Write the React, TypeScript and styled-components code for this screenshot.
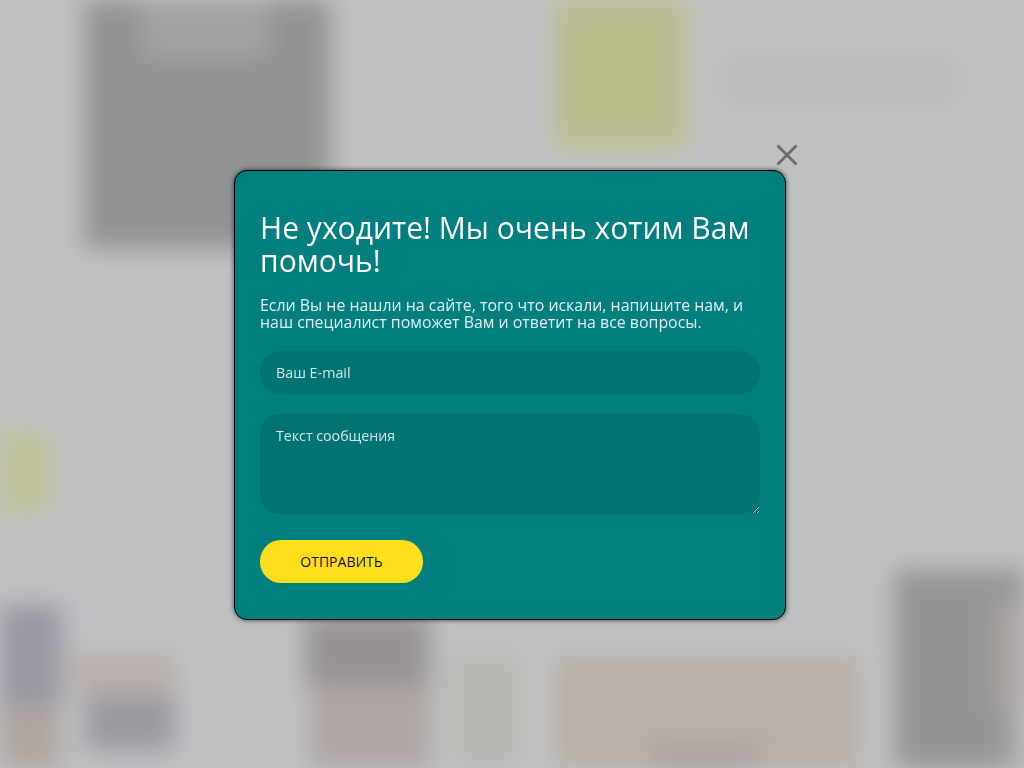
import React from 'react';
import styled, { createGlobalStyle } from 'styled-components';

const GlobalStyle = createGlobalStyle`
  html, body {
    margin: 0;
    padding: 0;
    height: 100%;
    overflow: hidden;
    background: #bfc0c2;
    font-family: 'Open Sans', sans-serif;
  }
`;

const block = (color: string, x: number, y: number, w: number, h: number) =>
  `linear-gradient(${color}, ${color}) ${x + 40}px ${y + 40}px / ${w}px ${h}px no-repeat`;

// the page behind the popup, only colour patches are left of it after the blur
const patches = [
  block('#adb3aa', 1010, 700, 14, 68),
  block('#aca3a0', 995, 600, 29, 110),
  block('#959597', 895, 570, 129, 198),
  block('#a8a09c', 650, 745, 110, 23),
  block('#b8b0a8', 555, 655, 305, 113),
  block('#b6bab2', 450, 650, 70, 118),
  block('#989493', 305, 615, 125, 70),
  block('#aea6a3', 310, 685, 120, 83),
  block('#9c99a0', 85, 695, 90, 55),
  block('#b9b0ac', 70, 650, 105, 45),
  block('#aea6a0', 0, 705, 60, 63),
  block('#9a98a2', 0, 605, 62, 100),
  block('#bdc096', 0, 432, 52, 80),
  block('#bcbd8e', 555, 0, 132, 148),
  block('#a1a2a3', 140, 0, 130, 60),
  block('#929295', 85, 0, 245, 248),
  block('#b9babc', 720, 50, 240, 60),
].join(', ');

const Backdrop = styled.div`
  position: fixed;
  inset: -40px;
  background: ${patches}, #bfc0c2;
  filter: blur(12px);
`;

const Overlay = styled.div`
  position: fixed;
  inset: 0;
  padding: 170px 0 0 234px;
`;

const Modal = styled.div`
  position: relative;
  box-sizing: border-box;
  width: 552px;
  height: 450px;
  padding: 40px 25px 25px;
  background: #007f7e;
  border: 1px solid #000;
  border-radius: 13px;
  box-shadow: 0 0 5px rgba(0, 0, 0, 0.65);
`;

const CloseButton = styled.button`
  position: absolute;
  top: -28px;
  right: -14px;
  width: 24px;
  height: 24px;
  padding: 0;
  border: none;
  background: none;
  cursor: pointer;
  color: #6b6b6b;
`;

const Title = styled.h2`
  margin: 0 0 20px;
  font-size: 30.06px;
  font-weight: 400;
  line-height: 33px;
  color: #ffffff;
`;

const Lead = styled.p`
  margin: 0 0 20px;
  font-size: 15.9px;
  line-height: 17px;
  color: #e3f1f0;
`;

const Form = styled.form`
  display: flex;
  flex-direction: column;
  align-items: flex-start;
`;

const EmailInput = styled.input`
  box-sizing: border-box;
  width: 500px;
  height: 43px;
  margin-bottom: 20px;
  padding: 0 16px;
  border: none;
  border-radius: 21px;
  outline: none;
  background: #007473;
  font-family: 'Open Sans', sans-serif;
  font-size: 14.3px;
  color: #ffffff;

  &::placeholder {
    color: #d3e8e7;
    opacity: 1;
  }
`;

const MessageInput = styled.textarea`
  display: block;
  box-sizing: border-box;
  width: 500px;
  height: 100px;
  margin-bottom: 26px;
  padding: 12px 16px;
  border: none;
  border-radius: 20px;
  outline: none;
  background: #007473;
  font-family: 'Open Sans', sans-serif;
  font-size: 14.2px;
  line-height: 19px;
  color: #ffffff;

  &::placeholder {
    color: #d3e8e7;
    opacity: 1;
  }
`;

const SubmitButton = styled.button`
  width: 163px;
  height: 43px;
  padding: 0;
  border: none;
  border-radius: 21px;
  background: #ffdf1b;
  font-family: 'Open Sans', sans-serif;
  font-size: 14px;
  color: #111108;
  text-transform: uppercase;
  cursor: pointer;
`;

const App: React.FC = () => {
  return (
    <>
      <GlobalStyle />
      <Backdrop />
      <Overlay>
        <Modal>
          <CloseButton type="button" aria-label="Закрыть">
            <svg width="24" height="24" viewBox="0 0 24 24" fill="none" stroke="currentColor" strokeWidth="2.8">
              <path d="M2.5 2.5 L21.5 21.5 M21.5 2.5 L2.5 21.5" />
            </svg>
          </CloseButton>
          <Title>Не уходите! Мы очень хотим Вам помочь!</Title>
          <Lead>Если Вы не нашли на сайте, того что искали, напишите нам, и наш специалист поможет Вам и ответит на все вопросы.</Lead>
          <Form>
            <EmailInput type="email" placeholder="Ваш E-mail" />
            <MessageInput placeholder="Текст сообщения" />
            <SubmitButton type="button">Отправить</SubmitButton>
          </Form>
        </Modal>
      </Overlay>
    </>
  );
};

export default App;
